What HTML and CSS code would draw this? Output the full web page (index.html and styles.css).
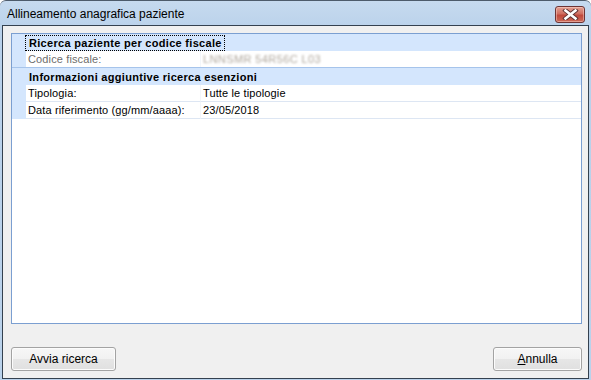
FILE: index.html
```html
<!DOCTYPE html>
<html lang="it">

<head>
    <meta charset="UTF-8">
    <title>Allineamento anagrafica paziente</title>
    <link rel="stylesheet" href="styles.css">
</head>

<body>
    <div class="window">
        <!-- Barra del titolo -->
        <div class="titlebar">
            <span class="title">Allineamento anagrafica paziente</span>
            <button class="close" title="Chiudi">
                <svg width="17" height="11" viewBox="0 0 17 11">
                    <path d="M3.5 1.5 L13.5 9.5 M13.5 1.5 L3.5 9.5" stroke="#5a3030" stroke-width="4.4" stroke-linecap="square" fill="none"/>
                    <path d="M3.5 1.5 L13.5 9.5 M13.5 1.5 L3.5 9.5" stroke="#ffffff" stroke-width="2.6" stroke-linecap="square" fill="none"/>
                </svg>
            </button>
        </div>

        <div class="client">
            <!-- Griglia proprietà -->
            <div class="grid">
                <div class="section"><span class="focus">Ricerca paziente per codice fiscale</span></div>
                <div class="row strong disabled">
                    <span class="label">Codice fiscale:</span>
                    <span class="value"><span class="blur">LNNSMR 54R56C L03</span></span>
                </div>
                <div class="section"><span>Informazioni aggiuntive ricerca esenzioni</span></div>
                <div class="row">
                    <span class="label">Tipologia:</span>
                    <span class="value">Tutte le tipologie</span>
                </div>
                <div class="row">
                    <span class="label">Data riferimento (gg/mm/aaaa):</span>
                    <span class="value">23/05/2018</span>
                </div>
            </div>

            <div class="footer">
                <button class="btn btn-search">Avvia ricerca</button>
                <button class="btn btn-cancel"><u>A</u>nnulla</button>
            </div>
        </div>
    </div>
</body>

</html>
```

FILE: styles.css
```css
html, body {
    margin: 0;
    padding: 0;
    background: #ffffff;
}

body {
    width: 591px;
    height: 380px;
    overflow: hidden;
    font-family: "Liberation Sans", "DejaVu Sans", sans-serif;
}

.window {
    width: 591px;
    height: 380px;
    box-sizing: border-box;
    display: flex;
    flex-direction: column;
    background: linear-gradient(#c6daef, #b9d1ea 30px, #bad2eb);
    border-top: 1px solid #4d5b6b;
    border-radius: 6px 6px 0 0;
    padding: 0 2px 1px 2px;
}

.titlebar {
    height: 24px;
    display: flex;
    align-items: center;
    justify-content: space-between;
    padding-left: 5px;
}

.title {
    font-size: 12px;
    color: #000000;
    padding-top: 1px;
}

.close {
    width: 30px;
    height: 17px;
    margin-right: 4px;
    margin-top: 2px;
    padding: 0;
    border: 1px solid #6d3434;
    border-radius: 3px;
    background: linear-gradient(#e3a193, #cf6e60 45%, #c0493c 55%, #cb6a58);
    display: flex;
    align-items: center;
    justify-content: center;
    box-shadow: inset 0 0 0 1px rgba(255, 220, 210, 0.45);
}

.client {
    flex: 1;
    display: flex;
    flex-direction: column;
    background: #f0f0f0;
    border: 1px solid #34414f;
    padding: 7px 6px 7px 8px;
}

.grid {
    flex: 1;
    background: #ffffff;
    border: 1px solid #7b9fd1;
    font-size: 11px;
}

.section {
    height: 17px;
    display: flex;
    align-items: center;
    background: #d4e6fd;
    padding-left: 13px;
    font-weight: bold;
    color: #000000;
    letter-spacing: 0.3px;
}

.section span {
    padding: 0 2px 0 3px;
    line-height: 14px;
    border: 1px solid transparent;
}

.section .focus {
    border: 1px dotted #000000;
}

.row {
    height: 17px;
    display: grid;
    grid-template-columns: 14px 174px 1fr;
    background: #d4e6fd;
    letter-spacing: 0.13px;
}

.row::before {
    content: "";
}

.row .label,
.row .value {
    background: #ffffff;
    border-bottom: 1px solid #dde6f3;
    display: flex;
    align-items: center;
    white-space: nowrap;
    color: #000000;
}

.row .label {
    padding-left: 2px;
}

.row .value {
    padding-left: 2px;
    border-left: 1px solid #f3f6fa;
}

.row.strong {
    border-bottom: 1px solid #a6c4eb;
    box-sizing: border-box;
}

.row.strong .label,
.row.strong .value {
    border-bottom: none;
}

.row.disabled .label {
    color: #6d6d6d;
}

.blur {
    color: #b0a89e;
    filter: blur(1.2px);
    letter-spacing: 0.4px;
}

.footer {
    height: 24px;
    margin-top: 23px;
    display: flex;
    justify-content: space-between;
}

.btn {
    height: 24px;
    border: 1px solid #a3a3a3;
    border-radius: 3px;
    background: linear-gradient(#f7f7f7, #f1f1f1 50%, #e6e6e6 51%, #e0e0e0);
    box-shadow: inset 0 0 0 1px #fcfcfc;
    font-family: "Liberation Sans", "DejaVu Sans", sans-serif;
    font-size: 12px;
    color: #000000;
    padding: 0;
}

.btn-search {
    width: 105px;
}

.btn-cancel {
    width: 89px;
}
```
